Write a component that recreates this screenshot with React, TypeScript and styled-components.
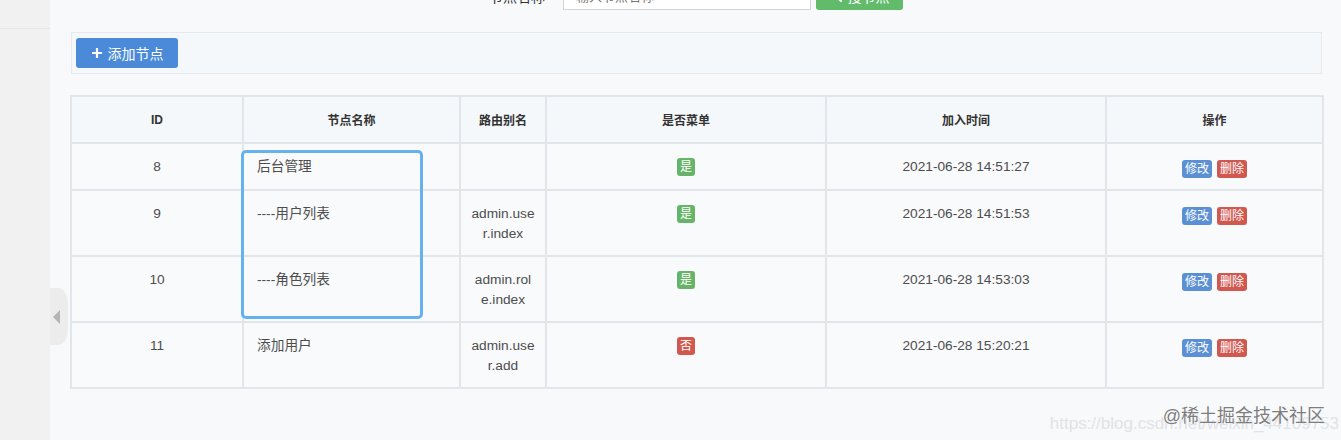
import styled, { createGlobalStyle } from "styled-components"

const GlobalStyle = createGlobalStyle`
  html, body {
    margin: 0;
    padding: 0;
    background: #f8f9fb;
    font-family: "Liberation Sans", "Noto Sans CJK SC", sans-serif;
    color: #333;
  }
`

const Page = styled.div`
  position: relative;
  display: flex;
  width: 1341px;
  height: 440px;
  overflow: hidden;
`

const Sidebar = styled.div`
  width: 50px;
  flex-shrink: 0;
  background: #f1f1f1;
  border-top: 28px solid #f1f1f1;
`

const SideLine = styled.div`
  height: 1px;
  background: #e6e6e6;
`

const CollapseHandle = styled.div`
  position: absolute;
  left: 50px;
  top: 288px;
  width: 18px;
  height: 57px;
  background: #ececec;
  border-radius: 0 10px 10px 0 / 0 16px 16px 0;
  display: flex;
  align-items: center;
  justify-content: center;

  &::before {
    content: "";
    display: block;
    border-style: solid;
    border-width: 7px 7px 7px 0;
    border-color: transparent #b4b4b4 transparent transparent;
    margin-right: 6px;
  }
`

const Main = styled.div`
  flex: 1;
  padding: 0 19px 0 20px;
  display: flex;
  flex-direction: column;
`

const SearchRow = styled.div`
  height: 30px;
  margin-top: -19px;
  display: flex;
  align-items: center;
  justify-content: center;
  gap: 5px;
`

const SearchLabel = styled.label`
  font-size: 14px;
  color: #333;
  margin-right: 13px;
`

const SearchInput = styled.input`
  width: 248px;
  height: 28px;
  box-sizing: border-box;
  border: 1px solid #d4d4d4;
  background: #fff;
  font-family: inherit;
  font-size: 13px;
  padding: 0 12px;
  color: #999;
  outline: none;
`

const SearchButton = styled.button`
  width: 87px;
  height: 28px;
  border: none;
  border-radius: 3px;
  background: #62bb6b;
  color: #fff;
  font-family: inherit;
  font-size: 14px;
`

const Toolbar = styled.div`
  margin: 21px 0 0 1px;
  height: 42px;
  box-sizing: border-box;
  padding: 5px 4px;
  background: #f5f8fb;
  border: 1px solid #e6eaee;
  display: flex;
  align-items: center;
`

const AddButton = styled.button`
  width: 102px;
  height: 30px;
  border: none;
  border-radius: 3px;
  background: #4a8ad8;
  color: #fff;
  font-family: inherit;
  font-size: 14px;
  display: flex;
  align-items: center;
  justify-content: center;
  gap: 5px;
  padding: 0;
`

const TableWrap = styled.div`
  position: relative;
  margin-top: 21px;
  width: 1252px;
`

const Table = styled.table`
  width: 1252px;
  border-collapse: collapse;
  table-layout: fixed;
  font-size: 13.7px;
  color: #4d4d4d;
`

const HeadCell = styled.th`
  height: 43px;
  background: #f5f8fb;
  border: 2px solid #e2e5e9;
  font-size: 12px;
  font-weight: bold;
  color: #333;
  vertical-align: middle;
`

const Row = styled.tr`
  height: 47px;
`

const Cell = styled.td<{ $left?: boolean }>`
  border: 2px solid #e2e5e9;
  padding: 13px 10px 11px;
  line-height: 20px;
  text-align: ${p => (p.$left ? "left" : "center")};
  padding-left: ${p => (p.$left ? "13px" : "10px")};
  vertical-align: top;
  word-break: break-all;
  background: #f9fafc;
`

const Badge = styled.span<{ $tone: "green" | "red" | "blue" }>`
  display: inline-block;
  height: 18px;
  line-height: 18px;
  padding: 0 3px;
  border-radius: 3px;
  font-size: 12px;
  color: #fff;
  vertical-align: middle;
  background: ${p =>
    p.$tone === "green" ? "#67b468" : p.$tone === "red" ? "#d2574f" : "#5b90d4"};
`

const Actions = styled.div`
  display: flex;
  justify-content: center;
  gap: 5px;
  padding-top: 3px;
`

const Highlight = styled.div`
  position: absolute;
  left: 171px;
  top: 55px;
  width: 182px;
  height: 169px;
  box-sizing: border-box;
  border: 3px solid #66b1ef;
  border-radius: 5px;
  pointer-events: none;
`

const Watermark = styled.div`
  position: absolute;
  right: 16px;
  bottom: 13px;
  text-align: right;
  pointer-events: none;
`

const WatermarkLink = styled.div`
  position: absolute;
  right: -14px;
  top: 9px;
  font-size: 17px;
  color: #e0e3e7;
  white-space: nowrap;
`

const WatermarkBrand = styled.div`
  position: relative;
  font-size: 18px;
  line-height: 22px;
  color: #7d7d7d;
  white-space: nowrap;
  text-shadow: 0 0 1px #fff;
`

const rows = [
  { id: 8, name: "后台管理", route: "", menu: true, time: "2021-06-28 14:51:27" },
  { id: 9, name: "----用户列表", route: "admin.user.index", menu: true, time: "2021-06-28 14:51:53" },
  { id: 10, name: "----角色列表", route: "admin.role.index", menu: true, time: "2021-06-28 14:53:03" },
  { id: 11, name: "添加用户", route: "admin.user.add", menu: false, time: "2021-06-28 15:20:21" },
]

const widths = [172, 217, 86, 280, 280, 217]

function PlusIcon() {
  return (
    <svg width="12" height="12" viewBox="0 0 12 12">
      <path d="M6 1v10M1 6h10" stroke="#fff" strokeWidth="2.2" />
    </svg>
  )
}

function SearchIcon() {
  return (
    <svg width="13" height="13" viewBox="0 0 14 14" style={{ marginRight: 5, verticalAlign: -1 }}>
      <circle cx="5.5" cy="5.5" r="4" stroke="#fff" strokeWidth="2" fill="none" />
      <path d="M8.5 8.5l4 4" stroke="#fff" strokeWidth="2.2" />
    </svg>
  )
}

export default function App() {
  return (
    <Page>
      <GlobalStyle />
      <Sidebar>
        <SideLine />
      </Sidebar>
      <CollapseHandle />
      <Main>
        <SearchRow>
          <SearchLabel>节点名称</SearchLabel>
          <SearchInput placeholder="输入节点名称" readOnly />
          <SearchButton>
            <SearchIcon />
            搜节点
          </SearchButton>
        </SearchRow>
        <Toolbar>
          <AddButton>
            <PlusIcon />
            添加节点
          </AddButton>
        </Toolbar>
        <TableWrap>
          <Table>
            <colgroup>
              {widths.map((w, i) => (
                <col key={i} style={{ width: w }} />
              ))}
            </colgroup>
            <thead>
              <tr>
                <HeadCell>ID</HeadCell>
                <HeadCell>节点名称</HeadCell>
                <HeadCell>路由别名</HeadCell>
                <HeadCell>是否菜单</HeadCell>
                <HeadCell>加入时间</HeadCell>
                <HeadCell>操作</HeadCell>
              </tr>
            </thead>
            <tbody>
              {rows.map(r => (
                <Row key={r.id}>
                  <Cell>{r.id}</Cell>
                  <Cell $left>{r.name}</Cell>
                  <Cell>{r.route}</Cell>
                  <Cell>
                    <Badge $tone={r.menu ? "green" : "red"}>{r.menu ? "是" : "否"}</Badge>
                  </Cell>
                  <Cell>{r.time}</Cell>
                  <Cell>
                    <Actions>
                      <Badge $tone="blue">修改</Badge>
                      <Badge $tone="red">删除</Badge>
                    </Actions>
                  </Cell>
                </Row>
              ))}
            </tbody>
          </Table>
          <Highlight />
        </TableWrap>
      </Main>
      <Watermark>
        <WatermarkLink>https://blog.csdn.net/weixin_44109753</WatermarkLink>
        <WatermarkBrand>@稀土掘金技术社区</WatermarkBrand>
      </Watermark>
    </Page>
  )
}
